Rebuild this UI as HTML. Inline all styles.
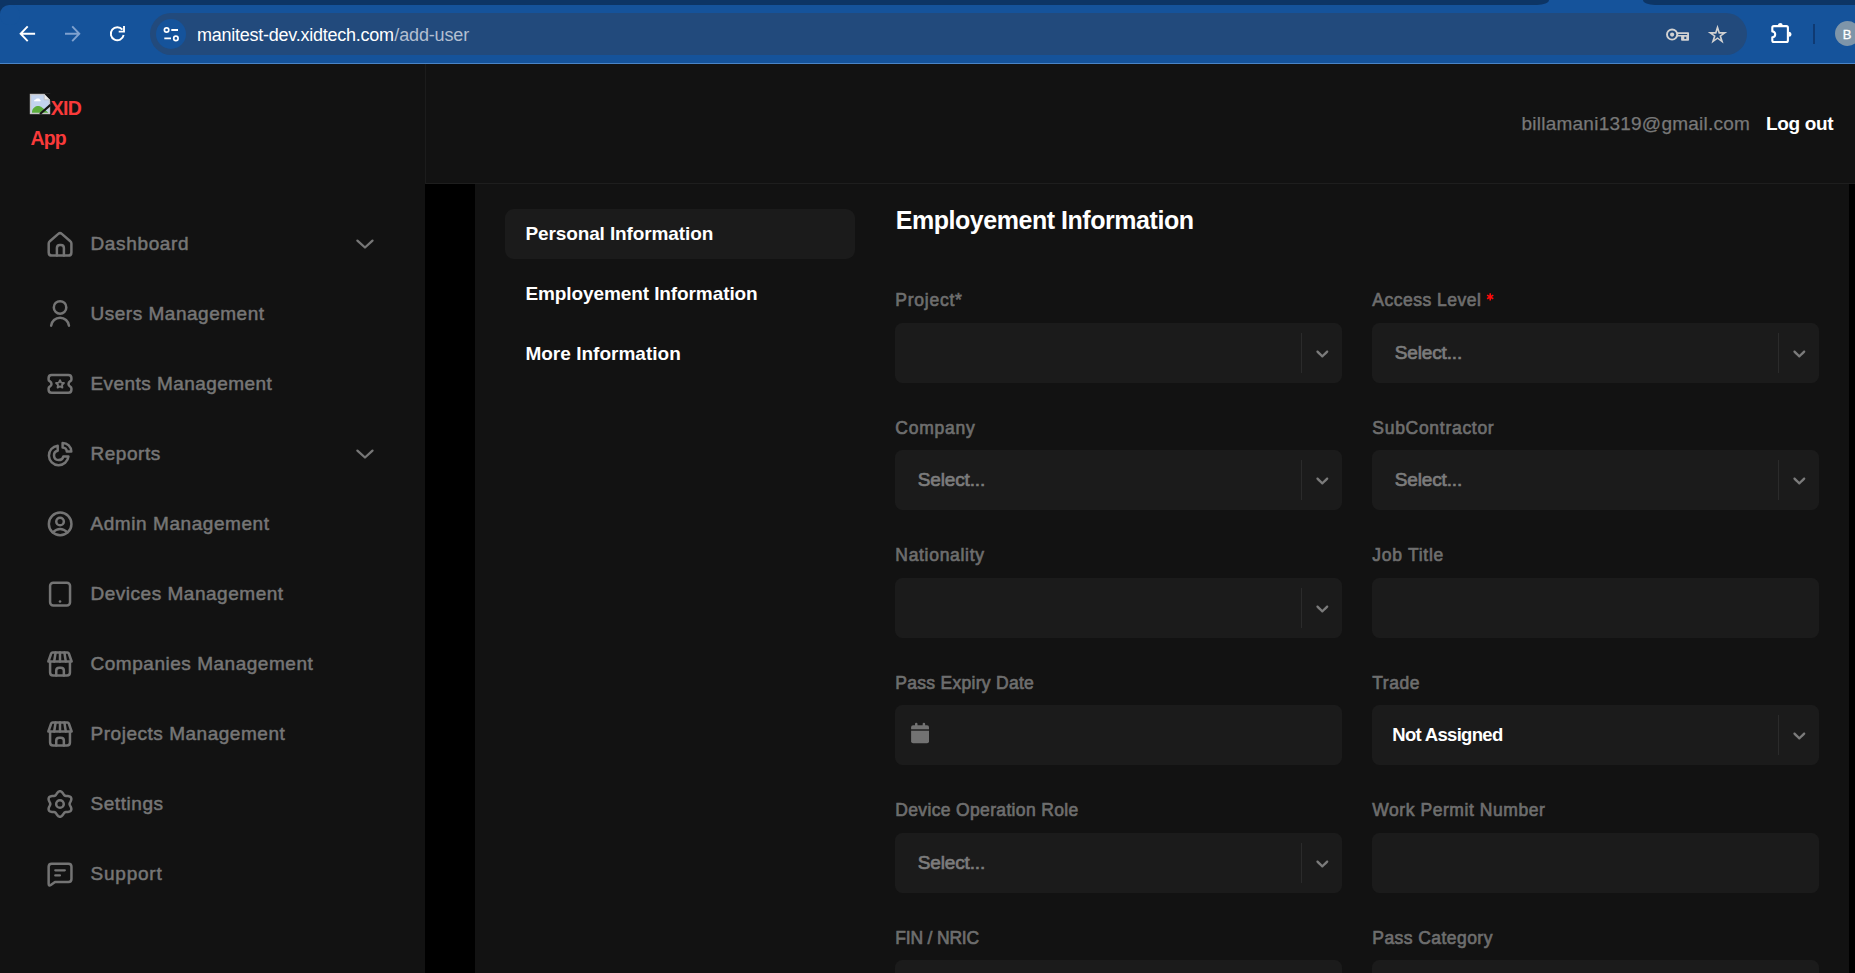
<!DOCTYPE html>
<html>
<head>
<meta charset="utf-8">
<title>add-user</title>
<style>
*{box-sizing:border-box;margin:0;padding:0}
html,body{width:1855px;height:973px;overflow:hidden;background:#121212;font-family:"Liberation Sans",sans-serif;}
body{position:relative}
.abs{position:absolute}
svg{display:block;overflow:visible}
/* ---------- browser chrome ---------- */
#chrome{position:absolute;left:0;top:0;width:1855px;height:64px;background:#15539b;overflow:hidden}
#chrome .strip-l{position:absolute;left:0;top:0;width:1548.5px;height:5px;background:#0d3565;border-bottom-right-radius:12px 5px}
#chrome .strip-r{position:absolute;left:1642.5px;top:0;width:213px;height:5px;background:#0d3565;border-bottom-left-radius:12px 5px}
#chrome .corner{position:absolute;left:0;top:5px;width:10px;height:10px;background:#0d3565}
#chrome .corner i{position:absolute;left:0;top:0;width:20px;height:20px;border-radius:9px;background:#15539b}
#chrome .line{position:absolute;left:0;top:63px;width:1855px;height:1px;background:#4a84c6}
#omni{position:absolute;left:150px;top:13px;width:1597px;height:42px;border-radius:21px;background:#224a7c}
#omni .site{position:absolute;left:6px;top:6px;width:30px;height:30px;border-radius:15px;background:#15539b}
#url{position:absolute;left:197px;top:22px;font-size:18px;line-height:24px;color:#fff;white-space:nowrap}
#url span{color:#a9b9d0}
/* ---------- page ---------- */
#sidebar{position:absolute;left:0;top:64px;width:425px;height:909px;background:#121212}
#sideborder{position:absolute;left:425px;top:64px;width:1px;height:120px;background:#1c1c1c}
#header{position:absolute;left:426px;top:64px;width:1429px;height:120px;background:#121212;border-bottom:1px solid #1e1e1e}
#blackL{position:absolute;left:425px;top:184px;width:50px;height:789px;background:#000}
#blackR{position:absolute;left:1849px;top:184px;width:6px;height:789px;background:#000}
.t{position:absolute;white-space:nowrap;line-height:24px;height:24px}
.nav{color:#8b8b8b;font-size:18px;font-weight:bold}
.lbl{color:#8b8b8b;font-size:17px;font-weight:bold}
.tab{color:#fff;font-size:18px;font-weight:bold}
.ph{color:#8b8b8b;font-size:17px;font-weight:bold}
.field{position:absolute;width:447.4px;height:60px;border-radius:7.5px;background:#1b1b1b}
.field .sep{position:absolute;left:406.4px;top:10px;width:1px;height:40px;background:#2b2b2b}
.field svg.chev{position:absolute;left:416.6px;top:19.75px}
.ico{position:absolute}
</style>
</head>
<body>
<div id="chrome">
  <div class="strip-l"></div><div class="strip-r"></div>
  <div class="corner"><i></i></div>
  <div id="omni"><div class="site"></div></div>
  <div class="line"></div>
</div>

<div id="sidebar"></div>
<div id="sideborder"></div>
<div id="header"></div>
<div id="blackL"></div>
<div id="blackR"></div>
<div class="abs" id="tabbg" style="left:505px;top:209px;width:350px;height:50px;border-radius:9px;background:#1b1b1b"></div>
<div class="field" style="left:894.6px;top:323px"><div class="sep" style="left:406.4px"></div><svg class="chev" style="left:417.0px" width="20.7" height="20.7" viewBox="0 0 20 20"><path fill="#7b7b7b" d="M4.516 7.548c0.436-0.446 1.043-0.481 1.576 0l3.908 3.747 3.908-3.747c0.533-0.481 1.141-0.446 1.574 0 0.436 0.445 0.408 1.197 0 1.615-0.406 0.418-4.695 4.502-4.695 4.502-0.217 0.223-0.502 0.335-0.787 0.335s-0.57-0.112-0.789-0.335c0 0-4.287-4.084-4.695-4.502s-0.436-1.17 0-1.615z"/></svg></div>
<div class="field" style="left:1372px;top:323px"><div class="sep" style="left:406px"></div><svg class="chev" style="left:416.55px" width="20.7" height="20.7" viewBox="0 0 20 20"><path fill="#7b7b7b" d="M4.516 7.548c0.436-0.446 1.043-0.481 1.576 0l3.908 3.747 3.908-3.747c0.533-0.481 1.141-0.446 1.574 0 0.436 0.445 0.408 1.197 0 1.615-0.406 0.418-4.695 4.502-4.695 4.502-0.217 0.223-0.502 0.335-0.787 0.335s-0.57-0.112-0.789-0.335c0 0-4.287-4.084-4.695-4.502s-0.436-1.17 0-1.615z"/></svg></div>
<div class="field" style="left:894.6px;top:450px"><div class="sep" style="left:406.4px"></div><svg class="chev" style="left:417.0px" width="20.7" height="20.7" viewBox="0 0 20 20"><path fill="#7b7b7b" d="M4.516 7.548c0.436-0.446 1.043-0.481 1.576 0l3.908 3.747 3.908-3.747c0.533-0.481 1.141-0.446 1.574 0 0.436 0.445 0.408 1.197 0 1.615-0.406 0.418-4.695 4.502-4.695 4.502-0.217 0.223-0.502 0.335-0.787 0.335s-0.57-0.112-0.789-0.335c0 0-4.287-4.084-4.695-4.502s-0.436-1.17 0-1.615z"/></svg></div>
<div class="field" style="left:1372px;top:450px"><div class="sep" style="left:406px"></div><svg class="chev" style="left:416.55px" width="20.7" height="20.7" viewBox="0 0 20 20"><path fill="#7b7b7b" d="M4.516 7.548c0.436-0.446 1.043-0.481 1.576 0l3.908 3.747 3.908-3.747c0.533-0.481 1.141-0.446 1.574 0 0.436 0.445 0.408 1.197 0 1.615-0.406 0.418-4.695 4.502-4.695 4.502-0.217 0.223-0.502 0.335-0.787 0.335s-0.57-0.112-0.789-0.335c0 0-4.287-4.084-4.695-4.502s-0.436-1.17 0-1.615z"/></svg></div>
<div class="field" style="left:894.6px;top:578px"><div class="sep" style="left:406.4px"></div><svg class="chev" style="left:417.0px" width="20.7" height="20.7" viewBox="0 0 20 20"><path fill="#7b7b7b" d="M4.516 7.548c0.436-0.446 1.043-0.481 1.576 0l3.908 3.747 3.908-3.747c0.533-0.481 1.141-0.446 1.574 0 0.436 0.445 0.408 1.197 0 1.615-0.406 0.418-4.695 4.502-4.695 4.502-0.217 0.223-0.502 0.335-0.787 0.335s-0.57-0.112-0.789-0.335c0 0-4.287-4.084-4.695-4.502s-0.436-1.17 0-1.615z"/></svg></div>
<div class="field" style="left:1372px;top:578px"></div>
<div class="field" style="left:894.6px;top:705px"></div>
<div class="field" style="left:1372px;top:705px"><div class="sep" style="left:406px"></div><svg class="chev" style="left:416.55px" width="20.7" height="20.7" viewBox="0 0 20 20"><path fill="#7b7b7b" d="M4.516 7.548c0.436-0.446 1.043-0.481 1.576 0l3.908 3.747 3.908-3.747c0.533-0.481 1.141-0.446 1.574 0 0.436 0.445 0.408 1.197 0 1.615-0.406 0.418-4.695 4.502-4.695 4.502-0.217 0.223-0.502 0.335-0.787 0.335s-0.57-0.112-0.789-0.335c0 0-4.287-4.084-4.695-4.502s-0.436-1.17 0-1.615z"/></svg></div>
<div class="field" style="left:894.6px;top:833px"><div class="sep" style="left:406.4px"></div><svg class="chev" style="left:417.0px" width="20.7" height="20.7" viewBox="0 0 20 20"><path fill="#7b7b7b" d="M4.516 7.548c0.436-0.446 1.043-0.481 1.576 0l3.908 3.747 3.908-3.747c0.533-0.481 1.141-0.446 1.574 0 0.436 0.445 0.408 1.197 0 1.615-0.406 0.418-4.695 4.502-4.695 4.502-0.217 0.223-0.502 0.335-0.787 0.335s-0.57-0.112-0.789-0.335c0 0-4.287-4.084-4.695-4.502s-0.436-1.17 0-1.615z"/></svg></div>
<div class="field" style="left:1372px;top:833px"></div>
<div class="field" style="left:894.6px;top:960px"></div>
<div class="field" style="left:1372px;top:960px"></div>

<svg class="abs" style="left:40px;top:225px" width="40" height="40" viewBox="40 225 40 40" ><path d="M48.7 243.6Q48.7 242.2 49.8 241.3L58.3 233.9Q60.05 232.4 61.8 233.9L70.3 241.3Q71.4 242.2 71.4 243.6V252.6Q71.4 255.6 68.4 255.6H51.7Q48.7 255.6 48.7 252.6Z" fill="none" stroke="#747474" stroke-width="2.5" stroke-linecap="round" stroke-linejoin="round"/><path d="M56.9 255.6V248Q56.9 245 59.9 245H60.9Q63.9 245 63.9 248V255.6" fill="none" stroke="#747474" stroke-width="2.5" stroke-linecap="round" stroke-linejoin="round"/></svg>
<svg class="abs" style="left:40px;top:295px" width="40" height="40" viewBox="40 295 40 40" ><circle cx="60.06" cy="307.4" r="6.25" fill="none" stroke="#747474" stroke-width="2.5"/><path d="M51.15 325.7A8.95 8.95 0 0 1 68.95 325.7" fill="none" stroke="#747474" stroke-width="2.5" stroke-linecap="round" stroke-linejoin="round"/></svg>
<svg class="abs" style="left:40px;top:365px" width="40" height="40" viewBox="40 365 40 40" ><path d="M51.6 375.1H68.4Q71.4 375.1 71.4 378.1V379.4Q71.4 380.6 70.3 381.2Q68.5 382.2 68.5 383.9Q68.5 385.6 70.3 386.6Q71.4 387.2 71.4 388.4V389.75Q71.4 392.75 68.4 392.75H51.6Q48.6 392.75 48.6 389.75V388.4Q48.6 387.2 49.7 386.6Q51.5 385.6 51.5 383.9Q51.5 382.2 49.7 381.2Q48.6 380.6 48.6 379.4V378.1Q48.6 375.1 51.6 375.1Z" fill="none" stroke="#747474" stroke-width="2.5" stroke-linecap="round" stroke-linejoin="round"/><path d="M60.00 380.20L61.23 382.60L63.90 383.03L62.00 384.95L62.41 387.62L60.00 386.40L57.59 387.62L58.00 384.95L56.10 383.03L58.77 382.60Z" fill="none" stroke="#747474" stroke-width="1.9" stroke-linecap="round" stroke-linejoin="round"/></svg>
<svg class="abs" style="left:40px;top:435px" width="40" height="40" viewBox="40 435 40 40" ><path d="M57.7 445.65A9.8 9.8 0 1 0 68.45 456.4L63.3 456.4A4.7 4.7 0 1 1 57.7 450.8Z" fill="none" stroke="#747474" stroke-width="2.5" stroke-linecap="round" stroke-linejoin="round"/><path d="M62.6 442.9A8.7 8.7 0 0 1 71.3 451.6L66.8 451.6A4.2 4.2 0 0 0 62.6 447.4Z" fill="none" stroke="#747474" stroke-width="2.5" stroke-linecap="round" stroke-linejoin="round"/></svg>
<svg class="abs" style="left:40px;top:505px" width="40" height="40" viewBox="40 505 40 40" ><circle cx="60.15" cy="523.9" r="11.3" fill="none" stroke="#747474" stroke-width="2.5"/><circle cx="60.05" cy="521.55" r="3.8" fill="none" stroke="#747474" stroke-width="2.5"/><path d="M52.6 532.4Q60.1 525.6 67.6 532.4" fill="none" stroke="#747474" stroke-width="2.5" stroke-linecap="round" stroke-linejoin="round"/></svg>
<svg class="abs" style="left:40px;top:575px" width="40" height="40" viewBox="40 575 40 40" ><rect x="50.1" y="582.65" width="19.95" height="22.8" rx="3.2" fill="none" stroke="#747474" stroke-width="2.5"/><circle cx="60.04" cy="601.5" r="1.3" fill="#747474"/></svg>
<svg class="abs" style="left:40px;top:645px" width="40" height="40" viewBox="40 645 40 40" ><path d="M 52.60 652.45L 67.40 652.45Q 68.40 652.45 68.80 653.40L 71.60 661.50L 48.40 661.50L 51.20 653.40Q 51.60 652.45 52.60 652.45Z" fill="none" stroke="#747474" stroke-width="2.6" stroke-linecap="round" stroke-linejoin="round"/><path d="M 55.60 652.45L 54.20 661.50M 60.00 652.45V 661.50M 64.40 652.45L 65.80 661.50" fill="none" stroke="#747474" stroke-width="2.5" stroke-linecap="round" stroke-linejoin="round"/><path d="M 50.10 662.00V 672.45Q 50.10 675.45 53.10 675.45H 66.95Q 69.95 675.45 69.95 672.45V 662.00" fill="none" stroke="#747474" stroke-width="2.5" stroke-linecap="round" stroke-linejoin="round"/><path d="M 56.25 675.45V 670.60Q 56.25 667.65 59.20 667.65H 60.90Q 63.85 667.65 63.85 670.60V 675.45" fill="none" stroke="#747474" stroke-width="2.5" stroke-linecap="round" stroke-linejoin="round"/></svg>
<svg class="abs" style="left:40px;top:715px" width="40" height="40" viewBox="40 715 40 40" ><path d="M 52.60 722.45L 67.40 722.45Q 68.40 722.45 68.80 723.40L 71.60 731.50L 48.40 731.50L 51.20 723.40Q 51.60 722.45 52.60 722.45Z" fill="none" stroke="#747474" stroke-width="2.6" stroke-linecap="round" stroke-linejoin="round"/><path d="M 55.60 722.45L 54.20 731.50M 60.00 722.45V 731.50M 64.40 722.45L 65.80 731.50" fill="none" stroke="#747474" stroke-width="2.5" stroke-linecap="round" stroke-linejoin="round"/><path d="M 50.10 732.00V 742.45Q 50.10 745.45 53.10 745.45H 66.95Q 69.95 745.45 69.95 742.45V 732.00" fill="none" stroke="#747474" stroke-width="2.5" stroke-linecap="round" stroke-linejoin="round"/><path d="M 56.25 745.45V 740.60Q 56.25 737.65 59.20 737.65H 60.90Q 63.85 737.65 63.85 740.60V 745.45" fill="none" stroke="#747474" stroke-width="2.5" stroke-linecap="round" stroke-linejoin="round"/></svg>
<svg class="abs" style="left:40px;top:785px" width="40" height="40" viewBox="40 785 40 40" ><path d="M69.61 804.00L69.67 804.51L69.85 805.04L70.12 805.61L70.45 806.23L70.78 806.90L71.07 807.61L71.27 808.34L71.34 809.07L71.25 809.75L71.00 810.38L70.59 810.90L70.04 811.32L69.37 811.62L68.64 811.81L67.88 811.92L67.13 811.97L66.44 812.00L65.81 812.05L65.26 812.16L64.78 812.36L64.38 812.67L64.01 813.09L63.65 813.61L63.27 814.20L62.86 814.82L62.39 815.42L61.85 815.96L61.26 816.39L60.62 816.66L59.96 816.75L59.30 816.66L58.66 816.39L58.07 815.96L57.53 815.42L57.06 814.82L56.65 814.20L56.27 813.61L55.91 813.09L55.54 812.67L55.14 812.36L54.66 812.16L54.11 812.05L53.48 812.00L52.79 811.97L52.04 811.92L51.28 811.81L50.55 811.62L49.88 811.32L49.33 810.90L48.92 810.38L48.67 809.75L48.58 809.07L48.65 808.34L48.85 807.61L49.14 806.90L49.47 806.23L49.80 805.61L50.07 805.04L50.25 804.51L50.31 804.00L50.25 803.49L50.07 802.96L49.80 802.39L49.47 801.77L49.14 801.10L48.85 800.39L48.65 799.66L48.58 798.93L48.67 798.25L48.92 797.62L49.33 797.10L49.88 796.68L50.55 796.38L51.28 796.19L52.04 796.08L52.79 796.03L53.48 796.00L54.11 795.95L54.66 795.84L55.13 795.64L55.54 795.33L55.91 794.91L56.27 794.39L56.65 793.80L57.06 793.18L57.53 792.58L58.07 792.04L58.66 791.61L59.30 791.34L59.96 791.25L60.62 791.34L61.26 791.61L61.85 792.04L62.39 792.58L62.86 793.18L63.27 793.80L63.65 794.39L64.01 794.91L64.38 795.33L64.78 795.64L65.26 795.84L65.81 795.95L66.44 796.00L67.13 796.03L67.88 796.08L68.64 796.19L69.37 796.38L70.04 796.68L70.59 797.10L71.00 797.62L71.25 798.25L71.34 798.93L71.27 799.66L71.07 800.39L70.78 801.10L70.45 801.77L70.12 802.39L69.85 802.96L69.67 803.49Z" fill="none" stroke="#747474" stroke-width="2.5" stroke-linecap="round" stroke-linejoin="round"/><circle cx="59.96" cy="804" r="3.8" fill="none" stroke="#747474" stroke-width="2.5"/></svg>
<svg class="abs" style="left:40px;top:855px" width="40" height="40" viewBox="40 855 40 40" ><path d="M51.65 863.85H68.45Q71.45 863.85 71.45 866.85V878.95Q71.45 881.95 68.45 881.95H55L50.8 885Q48.65 886.4 48.65 883.8V866.85Q48.65 863.85 51.65 863.85Z" fill="none" stroke="#747474" stroke-width="2.5" stroke-linecap="round" stroke-linejoin="round"/><path d="M55.3 870.3H64.8M55.3 875.4H59.9" fill="none" stroke="#747474" stroke-width="2.3" stroke-linecap="round" stroke-linejoin="round"/></svg>
<svg class="abs" style="left:350px;top:230px" width="30" height="30" viewBox="350 230 30 30" ><path d="M357.4 240.6L365 247.5L372.5 240.6" fill="none" stroke="#767676" stroke-width="2.3" stroke-linecap="round" stroke-linejoin="round"/></svg>
<svg class="abs" style="left:350px;top:440px" width="30" height="30" viewBox="350 440 30 30" ><path d="M357.4 450.6L365 457.5L372.5 450.6" fill="none" stroke="#767676" stroke-width="2.3" stroke-linecap="round" stroke-linejoin="round"/></svg>
<svg class="abs" style="left:905px;top:718px" width="30" height="30" viewBox="905 718 30 30" ><rect x="911.1" y="725.3" width="17.9" height="17.9" rx="2" fill="#727272"/><rect x="910" y="729.3" width="20" height="1.4" fill="#1b1b1b"/><rect x="915" y="722.8" width="2.5" height="4" rx="1.2" fill="#727272"/><rect x="922.65" y="722.8" width="2.5" height="4" rx="1.2" fill="#727272"/></svg>
<svg class="abs" style="left:1484px;top:290px" width="14" height="14" viewBox="1484 290 14 14" ><path d="M1490.20 293.30L1490.20 300.50M1487.08 295.10L1493.32 298.70M1493.32 295.10L1487.08 298.70" fill="none" stroke="#ff0a0a" stroke-width="1.6" stroke-linecap="butt" stroke-linejoin="round"/></svg>
<svg class="abs" style="left:10px;top:14px" width="40" height="40" viewBox="10 14 40 40" ><path d="M35.1 33.75H21.5M27.7 26.3L20.6 33.75L27.7 41.2" fill="none" stroke="#ffffff" stroke-width="1.9" stroke-linecap="butt" stroke-linejoin="miter"/></svg>
<svg class="abs" style="left:55px;top:14px" width="40" height="40" viewBox="55 14 40 40" ><path d="M65 33.75H78.4M72.2 26.3L79.3 33.75L72.2 41.2" fill="none" stroke="#7fa1cf" stroke-width="1.9" stroke-linecap="butt" stroke-linejoin="miter"/></svg>
<svg class="abs" style="left:100px;top:14px" width="40" height="40" viewBox="100 14 40 40" ><path d="M122.42 29.70A6.5 6.5 0 1 0 123.66 35.05" fill="none" stroke="#ffffff" stroke-width="1.9" stroke-linecap="butt" stroke-linejoin="round"/><path d="M124 26.1V31.6H118.7" fill="none" stroke="#ffffff" stroke-width="1.9" stroke-linecap="butt" stroke-linejoin="miter"/></svg>
<svg class="abs" style="left:155px;top:18px" width="32" height="32" viewBox="155 18 32 32" ><circle cx="166.6" cy="30" r="2.2" fill="none" stroke="#ffffff" stroke-width="1.7"/><circle cx="175.9" cy="38.4" r="2.2" fill="none" stroke="#ffffff" stroke-width="1.7"/><path d="M171.3 30H178M164.3 38.4H171" fill="none" stroke="#ffffff" stroke-width="1.9" stroke-linecap="butt" stroke-linejoin="round"/></svg>
<svg class="abs" style="left:1660px;top:20px" width="36" height="30" viewBox="1660 20 36 30" ><circle cx="1672.1" cy="34.55" r="5.1" fill="none" stroke="#d2d2d2" stroke-width="1.9"/><circle cx="1672.1" cy="34.55" r="2.1" fill="#d2d2d2"/><path fill-rule="evenodd" fill="#d2d2d2" d="M1677 32.3H1688.2Q1689 32.3 1689 33.1V39.9Q1689 40.7 1688.2 40.7H1681.9Q1681.1 40.7 1681.1 39.9V36.6H1677ZM1678.2 33.95H1687.2V35H1678.2ZM1684.3 36.7H1686.3V38.9H1684.3Z"/></svg>
<svg class="abs" style="left:1704px;top:20px" width="28" height="28" viewBox="1704 20 28 28" ><path fill-rule="evenodd" fill="#d2d2d2" d="M1717.50 24.80L1719.82 31.90L1727.30 31.92L1721.26 36.32L1723.55 43.43L1717.50 39.05L1711.45 43.43L1713.74 36.32L1707.70 31.92L1715.18 31.90ZM1717.50 30.15L1718.65 33.67L1722.35 33.67L1719.35 35.85L1720.50 39.38L1717.50 37.20L1714.50 39.38L1715.65 35.85L1712.65 33.67L1716.35 33.67Z"/></svg>
<svg class="abs" style="left:1766px;top:18px" width="32" height="30" viewBox="1766 18 32 30" ><path d="M1773.8 26.1H1786.4Q1787.9 26.1 1787.9 27.6V40.55Q1787.9 42.05 1786.4 42.05H1773.8Q1772.3 42.05 1772.3 40.55V37.2A2.9 2.9 0 0 0 1772.3 31.4V27.6Q1772.3 26.1 1773.8 26.1Z" fill="none" stroke="#ffffff" stroke-width="2.1" stroke-linecap="round" stroke-linejoin="round"/><path d="M1777.9 25.3A2.4 2.4 0 0 1 1782.7 25.3Z" fill="#ffffff"/><path d="M1788.9 31.8A2.5 2.5 0 0 1 1788.9 36.8Z" fill="#ffffff"/></svg>
<div class="abs" style="left:1813px;top:24px;width:2px;height:19.6px;background:#0f3a73"></div>
<div class="abs" style="left:1835px;top:21px;width:25.2px;height:25.2px;border-radius:50%;background:#7e95a9"></div>
<svg class="abs" style="left:28px;top:92px" width="26" height="26" viewBox="28 92 26 26" ><rect x="30.5" y="94.5" width="19" height="19" fill="#c3d4ee" stroke="#c6c6c6" stroke-width="1.4"/><path d="M32 111.5C33 106 39 104.5 42 107.5C44 109 46 110.5 48.2 112.5V112.8H32Z" fill="#5cad3c"/><path d="M34 101.2Q34 99.6 35.6 99.6Q36.4 98 38 98.6Q39.6 98 40 99.8Q41 100 40.6 101.2Z" fill="#ffffff"/><path d="M44 93.5H51V101L44 93.5Z" fill="#121212"/><path d="M44.2 94.2V99.8H49.8Z" fill="#ececec" stroke="#bdbdbd" stroke-width="0.8"/><path d="M40 114L50.5 104.8" stroke="#161616" stroke-width="2.2" fill="none"/></svg>

<div class="t" id="n0" style="left:90.5px;top:231.7px;font-size:19px;color:#767676;letter-spacing:0.643px;-webkit-text-stroke:0.52px #767676;">Dashboard</div>
<div class="t" id="n1" style="left:90.5px;top:301.7px;font-size:19px;color:#767676;letter-spacing:0.514px;-webkit-text-stroke:0.52px #767676;">Users Management</div>
<div class="t" id="n2" style="left:90.5px;top:371.7px;font-size:19px;color:#767676;letter-spacing:0.44px;-webkit-text-stroke:0.52px #767676;">Events Management</div>
<div class="t" id="n3" style="left:90.5px;top:441.7px;font-size:19px;color:#767676;letter-spacing:0.528px;-webkit-text-stroke:0.52px #767676;">Reports</div>
<div class="t" id="n4" style="left:90.5px;top:511.7px;font-size:19px;color:#767676;letter-spacing:0.564px;-webkit-text-stroke:0.52px #767676;">Admin Management</div>
<div class="t" id="n5" style="left:90.5px;top:581.7px;font-size:19px;color:#767676;letter-spacing:0.52px;-webkit-text-stroke:0.52px #767676;">Devices Management</div>
<div class="t" id="n6" style="left:90.5px;top:651.7px;font-size:19px;color:#767676;letter-spacing:0.526px;-webkit-text-stroke:0.52px #767676;">Companies Management</div>
<div class="t" id="n7" style="left:90.5px;top:721.7px;font-size:19px;color:#767676;letter-spacing:0.526px;-webkit-text-stroke:0.52px #767676;">Projects Management</div>
<div class="t" id="n8" style="left:90.5px;top:791.7px;font-size:19px;color:#767676;letter-spacing:0.549px;-webkit-text-stroke:0.52px #767676;">Settings</div>
<div class="t" id="n9" style="left:90.5px;top:861.7px;font-size:19px;color:#767676;letter-spacing:0.776px;-webkit-text-stroke:0.52px #767676;">Support</div>
<div class="t" id="logo1" style="left:50.8px;top:95.9px;font-size:19.5px;color:#f93a3a;letter-spacing:-0.708px;font-weight:bold;">XID</div>
<div class="t" id="logo2" style="left:30.6px;top:125.9px;font-size:19.5px;color:#f93a3a;letter-spacing:-0.953px;font-weight:bold;">App</div>
<div class="t" id="email" style="left:1521.5px;top:111.8px;font-size:19px;color:#787878;letter-spacing:0.24px;-webkit-text-stroke:0.25px #787878;">billamani1319@gmail.com</div>
<div class="t" id="logout" style="left:1766.1px;top:111.8px;font-size:19px;color:#ffffff;letter-spacing:-0.357px;font-weight:bold;">Log out</div>
<div class="t" id="tab0" style="left:525.4px;top:222px;font-size:19px;color:#ffffff;letter-spacing:-0.112px;font-weight:bold;">Personal Information</div>
<div class="t" id="tab1" style="left:525.4px;top:282px;font-size:19px;color:#ffffff;letter-spacing:-0.094px;font-weight:bold;">Employement Information</div>
<div class="t" id="tab2" style="left:525.4px;top:342px;font-size:19px;color:#ffffff;letter-spacing:0.015px;font-weight:bold;">More Information</div>
<div class="t" id="title" style="left:895.7px;top:208px;font-size:25px;color:#ffffff;letter-spacing:-0.458px;font-weight:bold;">Employement Information</div>
<div class="t" id="l00" style="left:895.3px;top:288px;font-size:17.5px;color:#6e6e6e;letter-spacing:0.746px;-webkit-text-stroke:0.65px #6e6e6e;">Project*</div>
<div class="t" id="l01" style="left:1372.3px;top:288px;font-size:17.5px;color:#6e6e6e;letter-spacing:0.499px;-webkit-text-stroke:0.65px #6e6e6e;">Access Level</div>
<div class="t" id="l10" style="left:895.3px;top:416px;font-size:17.5px;color:#6e6e6e;letter-spacing:0.749px;-webkit-text-stroke:0.65px #6e6e6e;">Company</div>
<div class="t" id="l11" style="left:1372.3px;top:416px;font-size:17.5px;color:#6e6e6e;letter-spacing:0.713px;-webkit-text-stroke:0.65px #6e6e6e;">SubContractor</div>
<div class="t" id="l20" style="left:895.3px;top:543.4px;font-size:17.5px;color:#6e6e6e;letter-spacing:0.698px;-webkit-text-stroke:0.65px #6e6e6e;">Nationality</div>
<div class="t" id="l21" style="left:1372.3px;top:543.4px;font-size:17.5px;color:#6e6e6e;letter-spacing:0.727px;-webkit-text-stroke:0.65px #6e6e6e;">Job Title</div>
<div class="t" id="l30" style="left:895.3px;top:671px;font-size:17.5px;color:#6e6e6e;letter-spacing:0.285px;-webkit-text-stroke:0.65px #6e6e6e;">Pass Expiry Date</div>
<div class="t" id="l31" style="left:1372.3px;top:671px;font-size:17.5px;color:#6e6e6e;letter-spacing:0.53px;-webkit-text-stroke:0.65px #6e6e6e;">Trade</div>
<div class="t" id="l40" style="left:895.3px;top:798.4px;font-size:17.5px;color:#6e6e6e;letter-spacing:0.342px;-webkit-text-stroke:0.65px #6e6e6e;">Device Operation Role</div>
<div class="t" id="l41" style="left:1372.3px;top:798.4px;font-size:17.5px;color:#6e6e6e;letter-spacing:0.556px;-webkit-text-stroke:0.65px #6e6e6e;">Work Permit Number</div>
<div class="t" id="l50" style="left:895.3px;top:926px;font-size:17.5px;color:#6e6e6e;letter-spacing:-0.185px;-webkit-text-stroke:0.65px #6e6e6e;">FIN / NRIC</div>
<div class="t" id="l51" style="left:1372.3px;top:926px;font-size:17.5px;color:#6e6e6e;letter-spacing:0.443px;-webkit-text-stroke:0.65px #6e6e6e;">Pass Category</div>
<div class="t" id="p01" style="left:1394.8px;top:341.2px;font-size:19px;color:#7c7c7c;letter-spacing:-0.145px;-webkit-text-stroke:0.7px #7c7c7c;">Select...</div>
<div class="t" id="p10" style="left:917.8px;top:468.2px;font-size:19px;color:#7c7c7c;letter-spacing:-0.145px;-webkit-text-stroke:0.7px #7c7c7c;">Select...</div>
<div class="t" id="p11" style="left:1394.8px;top:468.2px;font-size:19px;color:#7c7c7c;letter-spacing:-0.145px;-webkit-text-stroke:0.7px #7c7c7c;">Select...</div>
<div class="t" id="p31" style="left:1392.3px;top:723.2px;font-size:18.5px;color:#ffffff;letter-spacing:-0.695px;font-weight:bold;">Not Assigned</div>
<div class="t" id="p40" style="left:917.8px;top:851.2px;font-size:19px;color:#7c7c7c;letter-spacing:-0.145px;-webkit-text-stroke:0.7px #7c7c7c;">Select...</div>
<div class="t" id="avatar" style="left:1842.8px;top:22.5px;font-size:13px;color:#ffffff;letter-spacing:0px;-webkit-text-stroke:0.3px #ffffff;">B</div>
<div class="t" id="url1" style="left:197.1px;top:22.6px;font-size:18px;color:#ffffff;letter-spacing:-0.259px;">manitest-dev.xidtech.com</div>
<div class="t" id="url2" style="left:394.3px;top:22.6px;font-size:18px;color:#b3bfd1;letter-spacing:-0.143px;">/add-user</div>

</body>
</html>
